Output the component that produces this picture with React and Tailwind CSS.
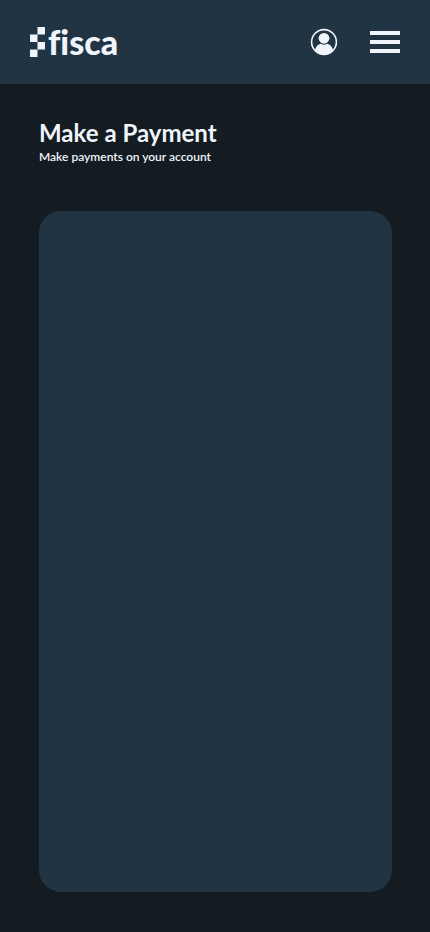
function Logo() {
  return (
    <a href="#home" aria-label="fisca" className="flex h-[84px] items-center text-[#f0f5fc]">
      <svg width="16" height="30" viewBox="0 0 16 30" fill="currentColor" aria-hidden="true">
        <path d="M7.5 0H15V7.5H7.5ZM0 7.5H7.5V15H0ZM7.5 15H15V22.5H7.5ZM0 22.5H7.5V30H0Z" />
      </svg>
      <span className="ml-0.5 text-[34px] leading-[36px] font-black [font-variant-ligatures:none]">fisca</span>
    </a>
  );
}

function ProfileIcon() {
  return (
    <svg width="28" height="28" viewBox="0 0 28 28" aria-hidden="true">
      <defs>
        <clipPath id="profile-circle">
          <circle cx="14" cy="14" r="12.8" />
        </clipPath>
      </defs>
      <g fill="currentColor" clipPath="url(#profile-circle)">
        <circle cx="14" cy="10.3" r="5.4" />
        <path d="M4.5 24C5 19 8.5 16 11 15.8Q14 17.8 17 15.8C19.5 16 23 19 23.5 24L20 28H8Z" />
      </g>
      <circle cx="14" cy="14" r="12.4" fill="none" stroke="currentColor" strokeWidth="1.6" />
    </svg>
  );
}

function MenuIcon() {
  return (
    <svg width="30" height="22" viewBox="0 0 30 22" fill="currentColor" aria-hidden="true">
      <path d="M0 0H30V4H0ZM0 9H30V13H0ZM0 18H30V22H0Z" />
    </svg>
  );
}

export default function App() {
  return (
    <div className="flex min-h-screen flex-col bg-[#141c22] font-['Lato',sans-serif] text-[#f0f5fc]">
      <header className="flex h-[84px] items-center justify-between bg-[#213444] px-[30px]">
        <Logo />
        <div className="flex items-center gap-8">
          <button type="button" aria-label="Account">
            <ProfileIcon />
          </button>
          <button type="button" aria-label="Open menu">
            <MenuIcon />
          </button>
        </div>
      </header>
      <main className="flex flex-1 flex-col pt-[35px] pr-[38px] pb-10 pl-[39px]">
        <h1 className="text-[24px] leading-[28px] font-bold">Make a Payment</h1>
        <p className="text-[12px] leading-[20px] font-semibold">Make payments on your account</p>
        <section aria-label="Payment" className="mt-11 flex-1 rounded-[22px] bg-[#213444]" />
      </main>
    </div>
  );
}
